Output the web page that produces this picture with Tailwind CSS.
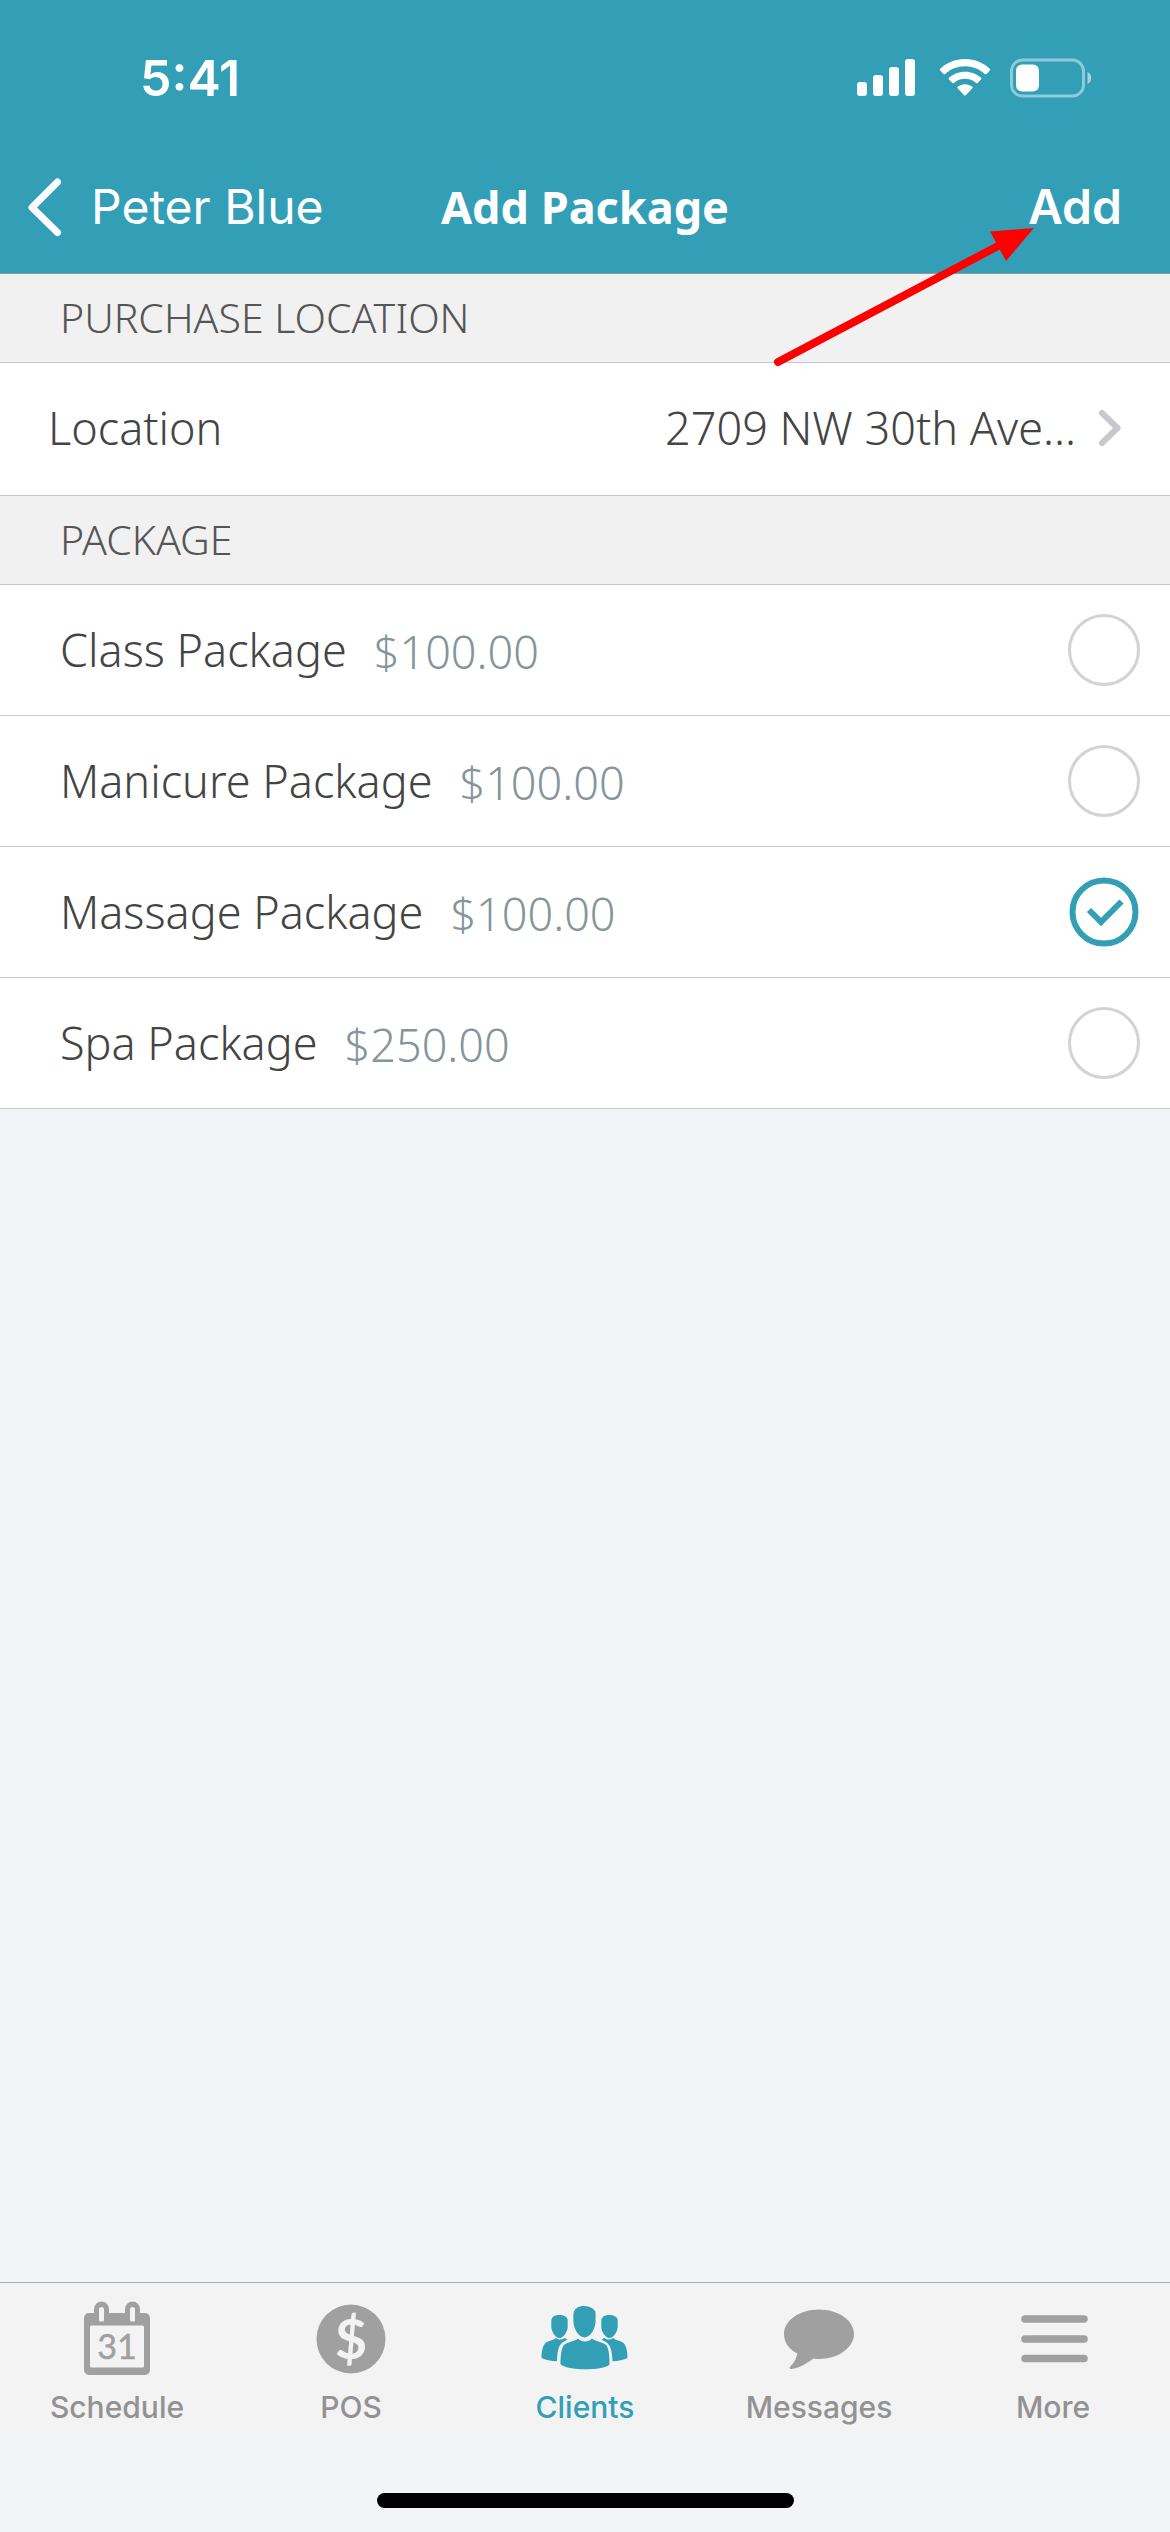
<!DOCTYPE html>
<html lang="en">
<head>
<meta charset="utf-8">
<meta name="viewport" content="width=device-width, initial-scale=1">
<title>Add Package</title>
<script src="https://cdn.jsdelivr.net/npm/@tailwindcss/browser@4"></script>
</head>
<body class="bg-[#f3f4f7] font-['Noto_Sans',sans-serif] text-[#444]">
<div class="relative flex min-h-screen flex-col">

  <header class="border-b border-[#8b9a9e] bg-[#329fb7] pb-[15px] font-['Inter',sans-serif] text-[48px] leading-[60px] text-white">
    <!-- Status bar -->
    <div class="flex h-[156px] items-center justify-between pr-[77px] pl-[140px]">
      <time class="text-[50px] font-semibold">5:41</time>
      <div class="flex items-center gap-[18px]">
        <svg class="h-10 w-[66px]" viewBox="0 0 66 40" fill="currentColor" aria-label="Signal">
          <rect x="2" y="24" width="10" height="14" rx="3"/><rect x="18" y="17" width="10" height="21" rx="3"/><rect x="34" y="9" width="10" height="29" rx="3"/><rect x="50" y="1" width="10" height="37" rx="3"/>
        </svg>
        <svg class="h-10 w-[52px]" viewBox="0 0 52 40" fill="currentColor" aria-label="Wi-Fi">
          <path d="M26 1C16 1 7.200 5 1.200 10.800c-.6.600-.6 1.200 0 1.800l3.300 3.300c.5.500 1.200.5 1.700 0C11.500 11 18.300 8.200 26 8.200s14.500 2.800 19.800 7.700c.5.500 1.200.5 1.700 0l3.300-3.300c.6-.6.600-1.200 0-1.800C44.800 5 36 1 26 1z"/>
          <path d="M26 13.700c-6.200 0-11.800 2.300-16 6-.6.500-.6 1.200 0 1.800l3.400 3.400c.5.500 1.100.5 1.600 0 3-2.600 6.800-4.100 11-4.100s8 1.500 11 4.100c.5.500 1.100.5 1.600 0l3.400-3.400c.6-.6.6-1.300 0-1.800-4.200-3.700-9.800-6-16-6z"/>
          <path d="M26 26.200c-2.700 0-5.200.9-7.200 2.400-.6.500-.6 1.200-.1 1.700l6.400 7c.5.600 1.300.6 1.800 0l6.400-7c.5-.5.500-1.200-.1-1.700-2-1.500-4.500-2.400-7.200-2.400z"/>
        </svg>
        <svg class="h-10 w-[84px]" viewBox="0 0 84 40" fill="none" aria-label="Battery">
          <rect x="2.500" y="2" width="72" height="36" rx="11" stroke="white" stroke-opacity=".45" stroke-width="3"/>
          <rect x="7" y="6.500" width="23" height="27" rx="6" fill="white"/>
          <path d="M78.500 14c5 2 5 10 0 12z" fill="white" fill-opacity=".55"/>
        </svg>
      </div>
    </div>
    <!-- Navigation bar -->
    <nav class="grid h-[102px] grid-cols-[1fr_auto_1fr] items-center px-6">
      <a href="#" class="flex items-center gap-[27px]">
        <svg class="h-[60px] w-10" viewBox="0 0 40 60" fill="none" stroke="currentColor" stroke-width="7" stroke-linecap="round" stroke-linejoin="round" aria-hidden="true"><path d="M33.500 5 8 30.500l25.500 25"/></svg>
        Peter Blue
      </a>
      <h1 class="font-['Noto_Sans',sans-serif] text-[45px] font-bold">Add Package</h1>
      <button type="button" class="mr-6 justify-self-end font-semibold">Add</button>
    </nav>
  </header>

  <main class="flex-1">
    <section>
      <h2 class="flex h-[89px] items-center border-b border-[#c8c7cc] bg-[#f1f1f1] px-[60px] text-[41px] font-light text-[#555]">PURCHASE LOCATION</h2>
      <button type="button" class="flex h-[133px] w-full items-center justify-between border-b border-[#c8c7cc] bg-white pr-[46px] pb-0.5 pl-[48px] text-[45px] font-light">
        <span>Location</span>
        <span class="flex items-center gap-[20px]">2709 NW 30th Ave...
          <svg class="h-10 w-[28px]" viewBox="0 0 28 40" fill="none" stroke="#c7c7cc" stroke-width="6" stroke-linecap="round" stroke-linejoin="round" aria-hidden="true"><path d="M6 5l15.500 15L6 35"/></svg>
        </span>
      </button>
    </section>

    <fieldset>
      <legend class="flex h-[89px] w-full items-center border-b border-[#c8c7cc] bg-[#f1f1f1] px-[60px] text-[41px] font-light text-[#555]">PACKAGE</legend>
      <label class="flex h-[131px] items-center gap-[27px] border-b border-[#c8c7cc] bg-white pr-[30px] pl-[60px] text-[45px] font-light">
        <span>Class Package</span><span class="pt-1 text-[#84959b]">$100.00</span>
        <span class="ml-auto grid">
          <input type="radio" name="package" class="peer col-start-1 row-start-1 size-[72px] appearance-none rounded-full border-3 border-[#d3d3d3] checked:border-0">
          <svg class="pointer-events-none invisible col-start-1 row-start-1 size-[72px] peer-checked:visible" viewBox="0 0 72 72" fill="none" stroke="#329fb7" stroke-width="6" aria-hidden="true"><circle cx="36" cy="36" r="31.500"/><path d="M21 34l12 12 20.500-20.500"/></svg>
        </span>
      </label>
      <label class="flex h-[131px] items-center gap-[27px] border-b border-[#c8c7cc] bg-white pr-[30px] pl-[60px] text-[45px] font-light">
        <span>Manicure Package</span><span class="pt-1 text-[#84959b]">$100.00</span>
        <span class="ml-auto grid">
          <input type="radio" name="package" class="peer col-start-1 row-start-1 size-[72px] appearance-none rounded-full border-3 border-[#d3d3d3] checked:border-0">
          <svg class="pointer-events-none invisible col-start-1 row-start-1 size-[72px] peer-checked:visible" viewBox="0 0 72 72" fill="none" stroke="#329fb7" stroke-width="6" aria-hidden="true"><circle cx="36" cy="36" r="31.500"/><path d="M21 34l12 12 20.500-20.500"/></svg>
        </span>
      </label>
      <label class="flex h-[131px] items-center gap-[27px] border-b border-[#c8c7cc] bg-white pr-[30px] pl-[60px] text-[45px] font-light">
        <span>Massage Package</span><span class="pt-1 text-[#84959b]">$100.00</span>
        <span class="ml-auto grid">
          <input type="radio" name="package" checked class="peer col-start-1 row-start-1 size-[72px] appearance-none rounded-full border-3 border-[#d3d3d3] checked:border-0">
          <svg class="pointer-events-none invisible col-start-1 row-start-1 size-[72px] peer-checked:visible" viewBox="0 0 72 72" fill="none" stroke="#329fb7" stroke-width="6" aria-hidden="true"><circle cx="36" cy="36" r="31.500"/><path d="M21 34l12 12 20.500-20.500"/></svg>
        </span>
      </label>
      <label class="flex h-[131px] items-center gap-[27px] border-b border-[#c8c7cc] bg-white pr-[30px] pl-[60px] text-[45px] font-light">
        <span>Spa Package</span><span class="pt-1 text-[#84959b]">$250.00</span>
        <span class="ml-auto grid">
          <input type="radio" name="package" class="peer col-start-1 row-start-1 size-[72px] appearance-none rounded-full border-3 border-[#d3d3d3] checked:border-0">
          <svg class="pointer-events-none invisible col-start-1 row-start-1 size-[72px] peer-checked:visible" viewBox="0 0 72 72" fill="none" stroke="#329fb7" stroke-width="6" aria-hidden="true"><circle cx="36" cy="36" r="31.500"/><path d="M21 34l12 12 20.500-20.500"/></svg>
        </span>
      </label>
    </fieldset>
  </main>

  <!-- Tab bar -->
  <nav class="grid grid-cols-5 border-t border-[#a9a9a9] bg-[#f3f3f3] pt-3 font-['Inter',sans-serif] text-[30px] leading-[48px] font-medium text-[#929292]">
    <a href="#" class="flex flex-col items-center">
      <svg class="size-[88px]" viewBox="0 0 88 88" aria-hidden="true">
        <path fill="#a0a0a0" fill-rule="evenodd" d="M16 18h5v-4a7.500 7.500 0 0 1 15 0v4h16v-4a7.500 7.500 0 0 1 15 0v4h5a5 5 0 0 1 5 5v52a5 5 0 0 1-5 5H16a5 5 0 0 1-5-5V23a5 5 0 0 1 5-5zm1 14v39a1.500 1.500 0 0 0 1.500 1.500h51a1.500 1.500 0 0 0 1.500-1.500V32a1.500 1.500 0 0 0-1.500-1.500h-51A1.500 1.500 0 0 0 17 32zm9-17.500v10.500a1.500 1.500 0 0 0 1.500 1.500h2a1.500 1.500 0 0 0 1.500-1.500V14.500a2.500 2.500 0 0 0-5 0zm31 0v10.500a1.500 1.500 0 0 0 1.500 1.500h2a1.500 1.500 0 0 0 1.500-1.500V14.500a2.500 2.500 0 0 0-5 0z"/>
        <text x="44" y="64" text-anchor="middle" font-family="Lato, sans-serif" font-size="34" font-weight="400" fill="#a0a0a0" stroke="#a0a0a0" stroke-width=".5">31</text>
      </svg>
      Schedule
    </a>
    <a href="#" class="flex flex-col items-center">
      <svg class="size-[88px]" viewBox="0 0 88 88" aria-hidden="true">
        <circle cx="44" cy="44" r="34.500" fill="#a0a0a0"/>
        <text x="44" y="64" text-anchor="middle" font-family="Lato, sans-serif" font-size="56" font-weight="700" fill="#f3f3f3">$</text>
      </svg>
      POS
    </a>
    <a href="#" class="flex flex-col items-center text-[#329fb7]" aria-current="page">
      <svg class="size-[88px]" viewBox="0 0 88 88" fill="currentColor" aria-hidden="true">
        <path d="M43 11c6 0 11 3 11.500 6.500.4 3-.2 6 .1 8.500 0 8-5.600 16.500-11.100 16.500S32.400 34 32.400 26c.3-2.500-.5-6 .3-8.500C34 13 38 11 43 11z"/>
        <path d="M37 43.500c3 4 11 4 14 0 4 3.500 12 3.500 14.500 7C68 54 68.500 62 68.500 69.500c-3 3.500-14.500 4.800-24.500 4.800s-22-2-24.500-5c0-7 .5-15 3-18.500 2.500-3.800 10.500-3.800 14.500-7.300z"/>
        <path d="M18 20c5 0 8.500 2 8.700 5v6.500c0 5-4.200 11.500-8.200 11.500s-8.200-6-8.200-11.500V26C10.500 22 13.500 20 18 20zM68 20c5 0 8.500 2 8.700 5v6.500c0 5-4.200 11.500-8.200 11.500s-8.200-6-8.200-11.500V26c.2-4 3.200-6 7.700-6z"/>
        <path d="M15 43c3 2 5.500 2 8.500 0l3 1.200-2 1.500c-7 3-8 9-8.500 20.500C10 66 4 65 .5 63c0-6 1-11.500 3.500-14.500 2.500-2.800 7.500-2.500 11-5.500zM72 43c-3 2-5.500 2-8.500 0l-3 1.200 2 1.500c7 3 8.500 9 9 20.500C77 66 83 65 86.500 63c0-6-1-11.500-3.500-14.500-2.500-2.800-7.500-2.500-11-5.500z"/>
      </svg>
      Clients
    </a>
    <a href="#" class="flex flex-col items-center">
      <svg class="size-[88px]" viewBox="0 0 88 88" fill="#a0a0a0" aria-hidden="true">
        <path d="M44 14.500c19.500 0 35 11 35 24.500S63.500 64 44 64c-2 0-4 0-5.500-.5C31 69 24 73 16.500 74c-2 0-2.500-1.200-1.200-2.600C19.500 68 21.500 63 22.300 58.500 13.500 54 9 47 9 39c0-13.500 15.500-24.500 35-24.500z"/>
      </svg>
      Messages
    </a>
    <a href="#" class="flex flex-col items-center">
      <svg class="size-[88px]" viewBox="0 0 88 88" stroke="#a0a0a0" stroke-width="7.500" stroke-linecap="round" aria-hidden="true"><path d="M16 24h59M16 44h59M16 63.500h59"/></svg>
      More
    </a>
  </nav>
  <div class="flex h-[101px] items-end justify-center pb-[24px]">
    <div class="h-[15px] w-[417px] rounded-full bg-black"></div>
  </div>

  <!-- Arrow pointing at the Add button -->
  <svg class="pointer-events-none absolute top-[220px] right-[130px] h-[150px] w-[270px]" viewBox="0 0 270 150" aria-hidden="true">
    <path d="M8 142 228 26" stroke="#f00" stroke-width="8" stroke-linecap="round"/>
    <path d="M264 8 220 11.500 236 41z" fill="#f00"/>
  </svg>
</div>
</body>
</html>
